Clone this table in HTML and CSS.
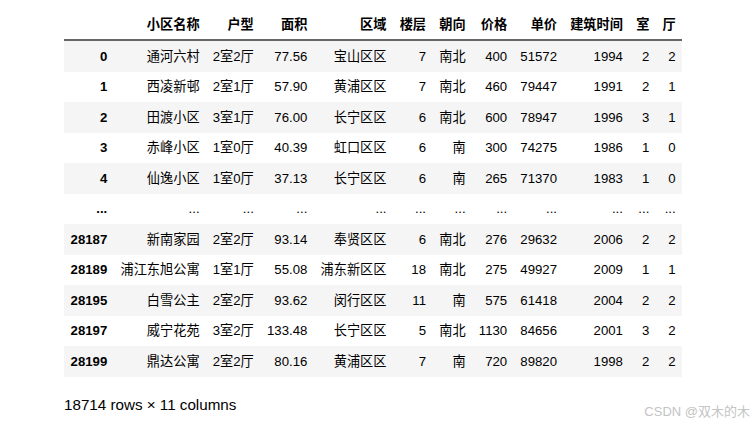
FILE: index.html
```html
<!DOCTYPE html>
<html lang="zh">
<head>
<meta charset="utf-8">
<link rel="stylesheet" href="styles.css">
</head>
<body>
<div class="page">
  <table class="df">
    <thead>
      <tr><th></th><th>小区名称</th><th>户型</th><th>面积</th><th>区域</th><th>楼层</th><th>朝向</th><th>价格</th><th>单价</th><th>建筑时间</th><th>室</th><th>厅</th></tr>
    </thead>
    <tbody>
      <tr><th>0</th><td>通河六村</td><td>2室2厅</td><td>77.56</td><td>宝山区区</td><td>7</td><td>南北</td><td>400</td><td>51572</td><td>1994</td><td>2</td><td>2</td></tr>
      <tr><th>1</th><td>西凌新邨</td><td>2室1厅</td><td>57.90</td><td>黄浦区区</td><td>7</td><td>南北</td><td>460</td><td>79447</td><td>1991</td><td>2</td><td>1</td></tr>
      <tr><th>2</th><td>田渡小区</td><td>3室1厅</td><td>76.00</td><td>长宁区区</td><td>6</td><td>南北</td><td>600</td><td>78947</td><td>1996</td><td>3</td><td>1</td></tr>
      <tr><th>3</th><td>赤峰小区</td><td>1室0厅</td><td>40.39</td><td>虹口区区</td><td>6</td><td>南</td><td>300</td><td>74275</td><td>1986</td><td>1</td><td>0</td></tr>
      <tr><th>4</th><td>仙逸小区</td><td>1室0厅</td><td>37.13</td><td>长宁区区</td><td>6</td><td>南</td><td>265</td><td>71370</td><td>1983</td><td>1</td><td>0</td></tr>
      <tr><th>...</th><td>...</td><td>...</td><td>...</td><td>...</td><td>...</td><td>...</td><td>...</td><td>...</td><td>...</td><td>...</td><td>...</td></tr>
      <tr><th>28187</th><td>新南家园</td><td>2室2厅</td><td>93.14</td><td>奉贤区区</td><td>6</td><td>南北</td><td>276</td><td>29632</td><td>2006</td><td>2</td><td>2</td></tr>
      <tr><th>28189</th><td>浦江东旭公寓</td><td>1室1厅</td><td>55.08</td><td>浦东新区区</td><td>18</td><td>南北</td><td>275</td><td>49927</td><td>2009</td><td>1</td><td>1</td></tr>
      <tr><th>28195</th><td>白雪公主</td><td>2室2厅</td><td>93.62</td><td>闵行区区</td><td>11</td><td>南</td><td>575</td><td>61418</td><td>2004</td><td>2</td><td>2</td></tr>
      <tr><th>28197</th><td>威宁花苑</td><td>3室2厅</td><td>133.48</td><td>长宁区区</td><td>5</td><td>南北</td><td>1130</td><td>84656</td><td>2001</td><td>3</td><td>2</td></tr>
      <tr><th>28199</th><td>鼎达公寓</td><td>2室2厅</td><td>80.16</td><td>黄浦区区</td><td>7</td><td>南</td><td>720</td><td>89820</td><td>1998</td><td>2</td><td>2</td></tr>
    </tbody>
  </table>
  <p class="shape">18714 rows × 11 columns</p>
</div>
<div class="mark">CSDN @双木的木</div>
</body>
</html>
```

FILE: styles.css
```css
html, body {
  margin: 0;
  padding: 0;
  background: #ffffff;
}

body {
  font-family: "Liberation Sans", Arial, "Noto Sans CJK SC", sans-serif;
  color: #000;
  width: 756px;
  height: 427px;
  position: relative;
  overflow: hidden;
}

.page {
  padding: 10px 0 0 64px;
}

.df {
  border-collapse: collapse;
  border-spacing: 0;
  font-size: 13.2px;
  color: #000;
}

.df thead {
  border-bottom: 2px solid #666;
}

.df th,
.df td {
  text-align: right;
  vertical-align: middle;
  padding: 0 6.6px;
  height: 30.5px;
  line-height: 17px;
  white-space: nowrap;
  border: none;
}

.df thead th {
  height: 29px;
  font-weight: bold;
}

.df tbody th {
  font-weight: bold;
}

.df tbody tr:nth-child(odd) {
  background: #f5f5f5;
}

.shape {
  margin: 19px 0 0 0;
  font-size: 15.2px;
  line-height: 18px;
  color: #000;
}

.mark {
  position: absolute;
  right: 6px;
  top: 404px;
  font-size: 13px;
  line-height: 16px;
  color: #c4c4c4;
  font-family: "Liberation Sans", Arial, "Noto Sans CJK SC", sans-serif;
}
```
